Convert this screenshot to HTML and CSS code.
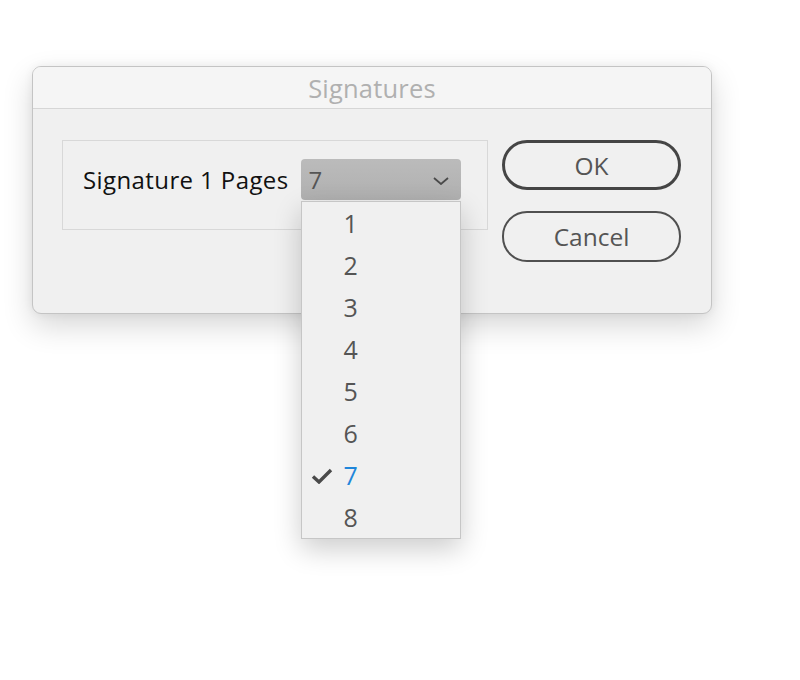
FILE: index.html
```html
<!DOCTYPE html>
<html>
<head>
<meta charset="utf-8">
<link rel="stylesheet" href="styles.css">
</head>
<body>
<div class="dialog">
  <div class="titlebar">Signatures</div>
  <div class="content">
    <div class="group">
      <span class="label">Signature 1 Pages</span>
      <div class="select">
        <span class="value">7</span>
        <svg class="chev" width="16" height="8" viewBox="0 0 16 8"><path d="M1 1 L8 7 L15 1" fill="none" stroke="#4a4a4a" stroke-width="1.8"/></svg>
        <ul class="menu">
          <li class="item">1</li>
          <li class="item">2</li>
          <li class="item">3</li>
          <li class="item">4</li>
          <li class="item">5</li>
          <li class="item">6</li>
          <li class="item checked"><svg class="check" width="22" height="16" viewBox="0 0 22 16"><path d="M2 8.5 L8 14 L20 2" fill="none" stroke="#4a4a4a" stroke-width="3.4" stroke-linejoin="miter"/></svg>7</li>
          <li class="item">8</li>
        </ul>
      </div>
    </div>
    <div class="buttons">
      <div class="btn ok">OK</div>
      <div class="btn cancel">Cancel</div>
    </div>
  </div>
</div>
</body>
</html>
```

FILE: styles.css
```css
html, body {
  margin: 0;
  padding: 0;
  background: #ffffff;
  font-family: "Open Sans", "Noto Sans", sans-serif;
}
body {
  box-sizing: border-box;
  min-height: 680px;
  padding: 66px 0 0 32px;
}
.dialog {
  width: 680px;
  height: 248px;
  box-sizing: border-box;
  background: #f0f0f0;
  border: 1px solid #c4c4c4;
  border-radius: 9px;
  box-shadow: 0 12px 30px rgba(0, 0, 0, 0.16), 0 0 10px rgba(0, 0, 0, 0.06);
}
.titlebar {
  height: 42px;
  box-sizing: border-box;
  background: #f5f5f5;
  border-bottom: 1px solid #d6d6d6;
  border-radius: 8px 8px 0 0;
  color: #b0b0b0;
  font-size: 25.5px;
  line-height: 42px;
  text-align: center;
  letter-spacing: 0.2px;
}
.content {
  display: flex;
  padding: 31px 0 0 29px;
  gap: 14px;
}
.group {
  width: 426px;
  height: 90px;
  box-sizing: border-box;
  border: 1px solid #d8d8d8;
  display: flex;
  align-items: flex-start;
  padding: 18px 0 0 20px;
  gap: 12px;
}
.label {
  font-size: 24px;
  line-height: 41px;
  color: #111;
  letter-spacing: 0.4px;
}
.select {
  position: relative;
  width: 160px;
  height: 41px;
  box-sizing: border-box;
  background: linear-gradient(#bbbbbb, #b0b0b0);
  border-radius: 4px;
  display: flex;
  align-items: center;
  justify-content: space-between;
  padding: 0 12px 0 8px;
}
.value {
  font-size: 24px;
  color: #555;
}
.chev {
  display: block;
  margin-top: 2px;
}
.menu {
  position: absolute;
  left: 0;
  top: 42px;
  width: 160px;
  margin: 0;
  padding: 0;
  list-style: none;
  box-sizing: border-box;
  background: #f0f0f0;
  border: 1px solid #c6c6c6;
  box-shadow: 0 10px 26px rgba(0, 0, 0, 0.2);
  z-index: 2;
}
.item {
  position: relative;
  height: 42px;
  line-height: 42px;
  font-size: 25px;
  color: #555;
  padding-left: 42px;
}
.item.checked {
  color: #1f86da;
}
.check {
  position: absolute;
  left: 9px;
  top: 14px;
}
.buttons {
  display: flex;
  flex-direction: column;
  gap: 21px;
}
.btn {
  width: 179px;
  height: 50px;
  box-sizing: border-box;
  border-radius: 25px;
  display: flex;
  align-items: center;
  justify-content: center;
  font-size: 24.5px;
  color: #555;
}
.ok {
  border: 3px solid #454545;
}
.cancel {
  border: 2px solid #505050;
  height: 51px;
}
```
